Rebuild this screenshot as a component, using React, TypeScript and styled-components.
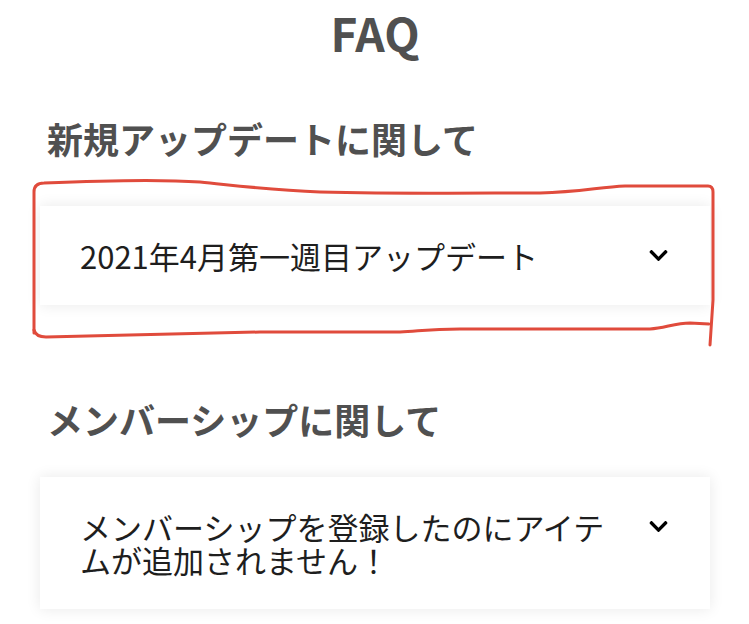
import React from 'react';
import styled, { createGlobalStyle } from 'styled-components';
import { FaChevronDown } from 'react-icons/fa';

const GlobalStyle = createGlobalStyle`
  html, body {
    margin: 0;
    padding: 0;
    background: #ffffff;
  }
  body {
    font-family: "Noto Sans CJK JP", "Noto Sans", sans-serif;
  }
`;

const Page = styled.div`
  position: relative;
  padding: 0 39px 40px 40px;
`;

const Title = styled.h1`
  margin: 0;
  padding-top: 2px;
  text-align: center;
  font-size: 46px;
  font-weight: 700;
  line-height: 60px;
  color: #505050;
`;

const Section = styled.section<{ top: number; gap: number }>`
  display: flex;
  flex-direction: column;
  gap: ${props => props.gap}px;
  margin-top: ${props => props.top}px;
`;

const SectionTitle = styled.h2`
  margin: 0;
  padding-left: 7px;
  font-size: 36px;
  font-weight: 700;
  line-height: 48px;
  color: #505050;
`;

const Card = styled.div`
  display: flex;
  align-items: flex-start;
  justify-content: space-between;
  gap: 22px;
  padding: 33px 41px 33px 40px;
  background: #ffffff;
  box-shadow: 0 0 14px rgba(0, 0, 0, 0.09);
`;

const Question = styled.div`
  font-size: 31px;
  line-height: 33px;
  color: #1e1e1e;
`;

const Chevron = styled.span`
  display: flex;
  flex: none;
  padding-top: 6px;
  color: #000;
  font-size: 21px;
`;

const Annotation = styled.svg`
  position: absolute;
  left: 0;
  top: 0;
  pointer-events: none;
`;

interface IFaqItem {
  question: string;
}

const FaqCard: React.FC<IFaqItem> = ({ question }: IFaqItem) => (
  <Card>
    <Question>{question}</Question>
    <Chevron><FaChevronDown /></Chevron>
  </Card>
);

export default function App() {
  return (<>
    <GlobalStyle />
    <Page>
      <Title>FAQ</Title>
      <Section top={52} gap={44}>
        <SectionTitle>新規アップデートに関して</SectionTitle>
        <FaqCard question="2021年4月第一週目アップデート" />
      </Section>
      <Section top={90} gap={34}>
        <SectionTitle>メンバーシップに関して</SectionTitle>
        <FaqCard question="メンバーシップを登録したのにアイテムが追加されません！" />
      </Section>
      <Annotation width="749" height="360" viewBox="0 0 749 360">
        <path
          d="M34 333 L34 192 Q34 183 44 183 C90 181 160 179 200 182 C240 186 270 190 320 192 C400 194 480 193 540 193 C580 192 600 187 625 186 L708 186 Q713 186 713 192 L713 300 L710 345"
          fill="none"
          stroke="#e04b3c"
          strokeWidth="3"
          strokeLinecap="round"
          strokeLinejoin="round"
        />
        <path
          d="M34 330 Q36 337 46 337 C120 335 200 333 260 332 L400 332 C420 331 430 329 460 329 L650 329 C665 328 675 323 690 323 L709 324"
          fill="none"
          stroke="#e04b3c"
          strokeWidth="3"
          strokeLinecap="round"
          strokeLinejoin="round"
        />
      </Annotation>
    </Page>
  </>);
}
